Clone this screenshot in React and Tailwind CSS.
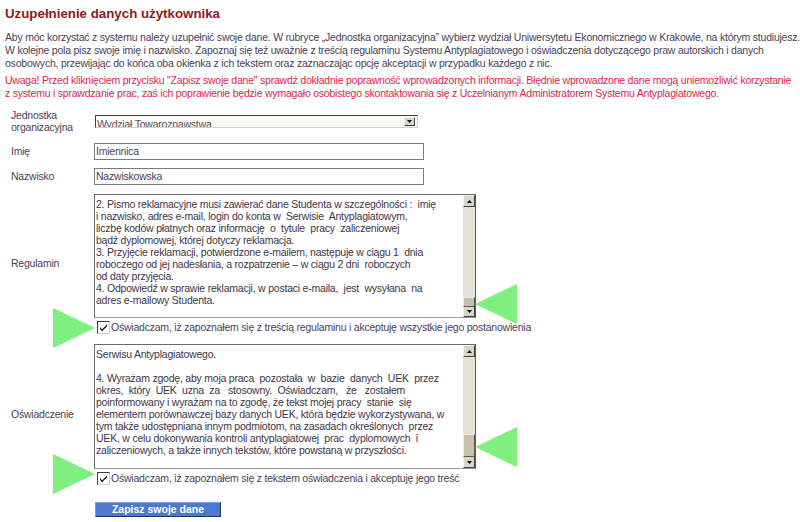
import React from "react";

const F = { fontFamily: '"Liberation Sans", Arial, sans-serif' };

function Check() {
  return (
    <div className="w-[13px] h-[13px] shrink-0 bg-white border border-t-[#404040] border-l-[#404040] border-b-[#d4d0c8] border-r-[#d4d0c8] flex items-center justify-center">
      <svg width="9" height="9" viewBox="0 0 9 9">
        <path d="M1 4 L3 6.5 L8 1.5 L8 3.2 L3 8.2 L1 5.8 Z" fill="#000" />
      </svg>
    </div>
  );
}

function ArrowBtn({ up }) {
  return (
    <div className="h-[12px] w-full bg-[#d8d6c8] border border-t-[#f4f2ea] border-l-[#f4f2ea] border-b-[#404040] border-r-[#404040] flex items-center justify-center">
      <svg width="5" height="3" viewBox="0 0 5 3">
        {up ? <path d="M0 3 L2.5 0 L5 3 Z" fill="#000" /> : <path d="M0 0 L2.5 3 L5 0 Z" fill="#000" />}
      </svg>
    </div>
  );
}

function FakeTextarea({ lines, height, thumbTop, thumbH, padTop }) {
  return (
    <div
      className="relative w-[382px] bg-white border border-t-[#6a6a6a] border-l-[#6a6a6a] border-b-[#9a9a9a] border-r-[#5a5a5a] flex overflow-hidden"
      style={{ height }}
    >
      <div className="flex-1 pl-[1px] text-[10.5px] leading-[12px] text-[#3f3548] whitespace-pre overflow-hidden" style={{ paddingTop: padTop }}>
        {lines.map((l, i) => (
          <div key={i} className="h-[12px]">{l}</div>
        ))}
      </div>
      <div className="w-[12px] h-full flex flex-col bg-[#e4e2d6]">
        <ArrowBtn up />
        <div className="flex-1 relative">
          <div
            className="absolute left-0 right-0 bg-[#c4c0ac] border border-t-[#eeeadc] border-l-[#eeeadc] border-b-[#5a5848] border-r-[#5a5848]"
            style={{ top: thumbTop, height: thumbH }}
          />
        </div>
        <ArrowBtn />
      </div>
    </div>
  );
}

function Triangle({ dir, className }) {
  return (
    <svg width="42" height="40" viewBox="0 0 42 40" className={className}>
      {dir === "left" ? (
        <path d="M0 20 L42 0 L42 40 Z" fill="#7ff07f" />
      ) : (
        <path d="M0 0 L42 20 L0 40 Z" fill="#7ff07f" />
      )}
    </svg>
  );
}

const reg = [
  "2. Pismo reklamacyjne musi zawierać dane Studenta w szczególności :  imię",
  "i nazwisko, adres e-mail, login do konta w  Serwisie  Antyplagiatowym,",
  "liczbę kodów płatnych oraz informację  o  tytule  pracy  zaliczeniowej",
  "bądź dyplomowej, której dotyczy reklamacja.",
  "3. Przyjęcie reklamacji, potwierdzone e-mailem, następuje w ciągu 1  dnia",
  "roboczego od jej nadesłania, a rozpatrzenie – w ciągu 2 dni  roboczych",
  "od daty przyjęcia.",
  "4. Odpowiedź w sprawie reklamacji, w postaci e-maila,  jest  wysyłana  na",
  "adres e-mailowy Studenta.",
];

const osw = [
  "Serwisu Antyplagiatowego.",
  "",
  "4. Wyrażam zgodę, aby moja praca  pozostała  w  bazie  danych  UEK  przez",
  "okres,  który  UEK  uzna  za   stosowny.  Oświadczam,   że   zostałem",
  "poinformowany i wyrażam na to zgodę, że tekst mojej pracy  stanie  się",
  "elementem porównawczej bazy danych UEK, która będzie wykorzystywana, w",
  "tym także udostępniana innym podmiotom, na zasadach określonych  przez",
  "UEK, w celu dokonywania kontroli antyplagiatowej  prac  dyplomowych  i",
  "zaliczeniowych, a także innych tekstów, które powstaną w przyszłości.",
];

export default function App() {
  return (
    <div className="relative w-[800px] h-[522px] bg-white overflow-hidden text-[#4a3f58] tracking-[-0.22px]" style={F}>
      <div className="pl-[5px] pt-[5px]">
        <h1 className="text-[13.3px] leading-[18px] font-bold text-[#8e1a1a] tracking-normal">Uzupełnienie danych użytkownika</h1>
        <p className="mt-[8px] text-[10.5px] leading-[13px] whitespace-nowrap">
          Aby móc korzystać z systemu należy uzupełnić swoje dane. W rubryce „Jednostka organizacyjna” wybierz wydział Uniwersytetu Ekonomicznego w Krakowie, na którym studiujesz.
          <br />
          W kolejne pola pisz swoje imię i nazwisko. Zapoznaj się też uważnie z treścią regulaminu Systemu Antyplagiatowego i oświadczenia dotyczącego praw autorskich i danych
          <br />
          osobowych, przewijając do końca oba okienka z ich tekstem oraz zaznaczając opcję akceptacji w przypadku każdego z nic.
        </p>
        <p className="mt-[4px] text-[10.5px] leading-[13px] whitespace-nowrap text-[#e3224e]">
          Uwaga! Przed kliknięciem przycisku "Zapisz swoje dane" sprawdź dokładnie poprawność wprowadzonych informacji. Błędnie wprowadzone dane mogą uniemożliwić korzystanie
          <br />
          z systemu i sprawdzanie prac, zaś ich poprawienie będzie wymagało osobistego skontaktowania się z Uczelnianym Administratorem Systemu Antyplagiatowego.
        </p>
      </div>

      <div className="pl-[11px] mt-[9px] flex flex-col text-[10.5px]">
        {/* Jednostka */}
        <div className="flex items-center h-[24px]">
          <div className="w-[83px] leading-[12px]">Jednostka<br />organizacyjna</div>
          <div className="ml-[1px] w-[323px] h-[13px] flex bg-[#fbfaf4] border border-t-[#404040] border-l-[#404040] border-b-[#d4d0c8] border-r-[#d4d0c8] overflow-hidden">
            <div className="flex-1 pl-[1px] pt-[1px] leading-[14px] text-[#5a5060] overflow-hidden">Wydział Towaroznawstwa</div>
            <div className="w-[11px] mr-[2px] my-[1px] bg-[#d8d6c8] border border-t-[#f4f2ea] border-l-[#f4f2ea] border-b-[#404040] border-r-[#404040] flex items-center justify-center">
              <svg width="5" height="3" viewBox="0 0 5 3"><path d="M0 0 L2.5 3 L5 0 Z" fill="#000" /></svg>
            </div>
          </div>
        </div>
        {/* Imię */}
        <div className="flex items-center mt-[10px]">
          <div className="w-[83px]">Imię</div>
          <div className="w-[330px] h-[17px] border border-[#7a7a7a] pl-[1px] leading-[15px] text-[#4a3f58]">Imiennica</div>
        </div>
        {/* Nazwisko */}
        <div className="flex items-center mt-[8px]">
          <div className="w-[83px]">Nazwisko</div>
          <div className="w-[330px] h-[17px] border border-[#7a7a7a] pl-[1px] leading-[15px] text-[#4a3f58]">Nazwiskowska</div>
        </div>
        {/* Regulamin */}
        <div className="flex items-center mt-[9px]">
          <div className="w-[83px]">Regulamin</div>
          <div className="flex flex-col">
            <FakeTextarea lines={reg} height={124} thumbTop={90} thumbH={10} padTop={3} />
            <div className="flex items-center mt-[3px] h-[13px] pl-[3px]">
              <Check />
              <span className="ml-[1px] whitespace-nowrap">Oświadczam, iż zapoznałem się z treścią regulaminu i akceptuję wszystkie jego postanowienia</span>
            </div>
          </div>
        </div>
        {/* Oświadczenie */}
        <div className="flex items-center mt-[10px]">
          <div className="w-[83px]">Oświadczenie</div>
          <div className="flex flex-col">
            <FakeTextarea lines={osw} height={125} thumbTop={77} thumbH={23} padTop={3} />
            <div className="flex items-center mt-[3px] h-[13px] pl-[3px]">
              <Check />
              <span className="ml-[1px] whitespace-nowrap">Oświadczam, iż zapoznałem się z tekstem oświadczenia i akceptuję jego treść</span>
            </div>
          </div>
        </div>
        {/* Button */}
        <div className="mt-[17px] pl-[84px]">
          <div className="w-[126px] h-[15px] bg-[#4b7acd] border border-t-[#7a9ee0] border-l-[#7a9ee0] border-b-[#1f3460] border-r-[#1f3460] text-white font-bold text-[10.5px] tracking-normal leading-[13px] text-center">
            Zapisz swoje dane
          </div>
        </div>
      </div>

      <Triangle dir="left" className="absolute left-[475px] top-[284px]" />
      <Triangle dir="right" className="absolute left-[53px] top-[308px]" />
      <Triangle dir="left" className="absolute left-[475px] top-[427px]" />
      <Triangle dir="right" className="absolute left-[53px] top-[454px]" />
    </div>
  );
}
